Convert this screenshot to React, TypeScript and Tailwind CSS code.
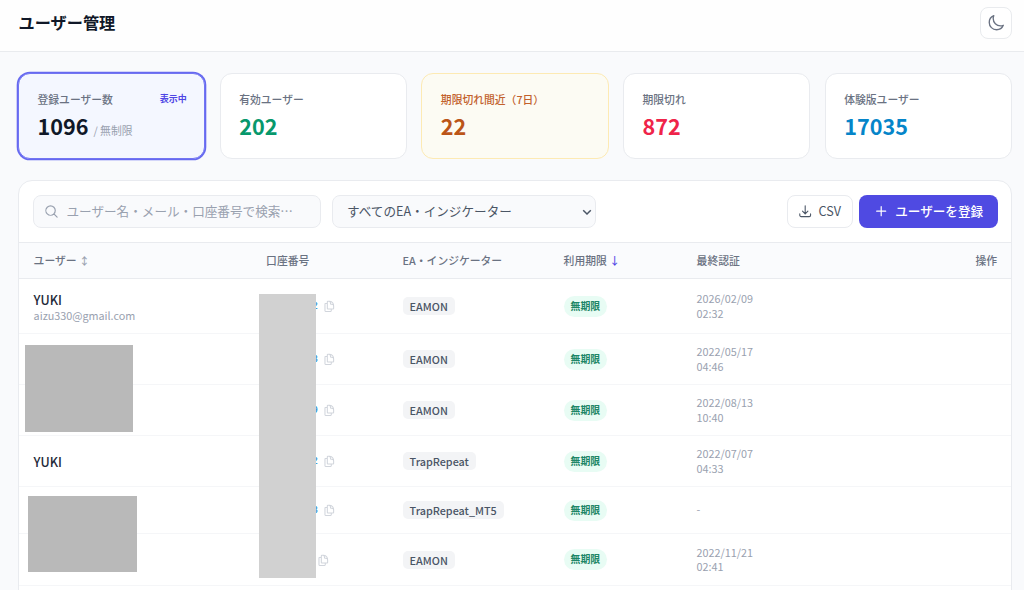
import {
  HiOutlineArrowDownTray,
  HiOutlineDocumentDuplicate,
  HiOutlineMagnifyingGlass,
  HiOutlineMoon,
  HiOutlinePlus,
} from "react-icons/hi2";

type Stat = {
  label: string;
  value: string;
  note?: string;
  badge?: string;
  card: string;
  labelColor: string;
  valueColor: string;
};

type UserRow = {
  id: number;
  name?: string;
  email?: string;
  lastDigit?: string;
  product: string;
  limit: string;
  date?: string;
  time?: string;
  height: string;
};

const stats: Stat[] = [
  {
    label: "登録ユーザー数",
    value: "1096",
    note: "/ 無制限",
    badge: "表示中",
    card: "border-[#7275f2] bg-[#f4f7ff] ring-[1.3px] ring-[#6669f0]",
    labelColor: "text-gray-500",
    valueColor: "text-gray-900",
  },
  {
    label: "有効ユーザー",
    value: "202",
    card: "border-[#e9ebef] bg-white",
    labelColor: "text-gray-500",
    valueColor: "text-[#07986c]",
  },
  {
    label: "期限切れ間近（7日）",
    value: "22",
    card: "border-[#fdeab3] bg-[#fcfbf3]",
    labelColor: "text-[#c2612c]",
    valueColor: "text-[#bb5518]",
  },
  {
    label: "期限切れ",
    value: "872",
    card: "border-[#e9ebef] bg-white",
    labelColor: "text-gray-500",
    valueColor: "text-[#ef2449]",
  },
  {
    label: "体験版ユーザー",
    value: "17035",
    card: "border-[#e9ebef] bg-white",
    labelColor: "text-gray-500",
    valueColor: "text-[#0585c9]",
  },
];

const users: UserRow[] = [
  { id: 1, name: "YUKI", email: "aizu330@gmail.com", lastDigit: "2", product: "EAMON", limit: "無期限", date: "2026/02/09", time: "02:32", height: "h-[55px]" },
  { id: 2, lastDigit: "8", product: "EAMON", limit: "無期限", date: "2022/05/17", time: "04:46", height: "h-[51px]" },
  { id: 3, lastDigit: "9", product: "EAMON", limit: "無期限", date: "2022/08/13", time: "10:40", height: "h-[51px]" },
  { id: 4, name: "YUKI", lastDigit: "2", product: "TrapRepeat", limit: "無期限", date: "2022/07/07", time: "04:33", height: "h-[51px]" },
  { id: 5, lastDigit: "8", product: "TrapRepeat_MT5", limit: "無期限", height: "h-[47px]" },
  { id: 6, product: "EAMON", limit: "無期限", date: "2022/11/21", time: "02:41", height: "h-[52px]" },
];

const columns = "grid grid-cols-[232.5px_136.5px_161px_133px_1fr_auto] items-center pr-[14px] pl-[14.6px]";

const StatCard = ({ stat }: { stat: Stat }) => (
  <div className={`h-[86px] rounded-[12px] border pt-[16.5px] pr-[17.5px] pl-[18.5px] ${stat.card}`}>
    <div className="flex items-center justify-between leading-[16px]">
      <span className={`text-[10.8px] font-medium ${stat.labelColor}`}>{stat.label}</span>
      {stat.badge && <span className="text-[9px] font-bold text-[#4f46e5]">{stat.badge}</span>}
    </div>
    <div className="mt-[5px] flex items-baseline gap-[5px] leading-[28px]">
      <span className={`text-[21.6px] font-bold ${stat.valueColor}`}>{stat.value}</span>
      {stat.note && <span className="text-[10.8px] text-gray-400">{stat.note}</span>}
    </div>
  </div>
);

const TableRow = ({ user }: { user: UserRow }) => (
  <div className={`${columns} ${user.height} border-b border-[#f5f6f8]`}>
    <div className="pt-px">
      {user.name && <p className="text-[12.6px] leading-[16px] font-medium text-gray-800">{user.name}</p>}
      {user.email && <p className="text-[10.8px] leading-[14px] text-gray-400">{user.email}</p>}
    </div>
    <div className="flex items-center gap-[5px] pt-px">
      <span className={`text-right font-['Liberation_Mono',monospace] text-[10.8px] text-sky-600 ${user.lastDigit ? "w-[52px]" : "w-[46px]"}`}>
        {user.lastDigit}
      </span>
      <HiOutlineDocumentDuplicate className="size-[12.6px] text-gray-300" strokeWidth={2} />
    </div>
    <div className="flex">
      <span className="rounded-[5px] bg-gray-100 px-[7px] text-[10.8px] leading-[18px] font-medium text-gray-600">
        {user.product}
      </span>
    </div>
    <div className="flex">
      <span className="rounded-full bg-[#e8fcf4] px-[7px] text-[9.9px] leading-[21px] font-bold text-[#1e8767]">
        {user.limit}
      </span>
    </div>
    <div className="pb-px text-[10.8px] leading-[14.4px] text-gray-400">
      {user.date ? (
        <>
          <p>{user.date}</p>
          <p>{user.time}</p>
        </>
      ) : (
        "-"
      )}
    </div>
  </div>
);

export default function App() {
  return (
    <div className="relative h-[590px] w-[1024px] overflow-hidden bg-[#f9fafc] font-['Noto_Sans_CJK_JP',sans-serif]">
      <header className="flex h-[52px] justify-between border-b border-[#e9ebee] bg-[#fefefe] pt-[6.5px] pr-[12px] pl-[18.5px]">
        <h1 className="text-[16.2px] leading-[31px] font-bold text-gray-900">ユーザー管理</h1>
        <button className="flex size-8 items-center justify-center rounded-[8px] border border-[#e9ebee] bg-white text-gray-500">
          <HiOutlineMoon className="size-[18px]" strokeWidth={1.8} />
        </button>
      </header>

      <main className="pt-[21px] pr-[12px] pl-[18px]">
        <div className="grid grid-cols-5 gap-[14.4px]">
          {stats.map((stat) => (
            <StatCard key={stat.label} stat={stat} />
          ))}
        </div>

        <section className="mt-[21px] h-[440px] overflow-hidden rounded-[14px] border border-[#e9ebef] bg-white">
          <div className="flex h-[62px] items-center border-b border-[#e9ebef] pr-[13px] pl-[14px]">
            <div className="flex h-[33px] w-[288px] items-center rounded-[8px] border border-[#e9ebef] bg-[#f9fafc] pl-[10px] text-gray-400">
              <HiOutlineMagnifyingGlass className="size-[15px]" strokeWidth={1.9} />
              <span className="ml-[7.5px] text-[12.6px]">ユーザー名・メール・口座番号で検索…</span>
            </div>
            <div className="ml-[11px] flex h-[33px] w-[264px] items-center justify-between rounded-[8px] border border-[#e9ebef] bg-[#f9fafc] pr-[3px] pl-[14px] text-gray-600">
              <span className="text-[12.6px]">すべてのEA・インジケーター</span>
              <svg className="size-[10px]" viewBox="0 0 10 10" fill="none" stroke="currentColor" strokeWidth="1.5">
                <path d="M1.2 3.2 5 7l3.8-3.8" />
              </svg>
            </div>
            <button className="ml-auto flex h-[33px] w-[66px] items-center justify-center gap-[6px] rounded-[8px] border border-[#e9ebef] bg-white pr-px text-[12.6px] text-gray-600">
              <HiOutlineArrowDownTray className="size-[14.4px]" strokeWidth={1.8} />
              CSV
            </button>
            <button className="ml-[6px] flex h-[33px] w-[139px] items-center justify-center gap-[7px] rounded-[8px] bg-[#4f4ae2] text-[12.6px] font-medium text-white">
              <HiOutlinePlus className="size-[14.4px]" strokeWidth={2} />
              ユーザーを登録
            </button>
          </div>

          <div className={`${columns} h-[36px] border-b border-[#e9ebef] bg-[#fafbfd] text-[10.8px] font-medium text-gray-500`}>
            <div>
              ユーザー <span className="text-gray-400">↕</span>
            </div>
            <div>口座番号</div>
            <div>EA・インジケーター</div>
            <div>
              利用期限 <span className="text-[#4f46e5]">↓</span>
            </div>
            <div>最終認証</div>
            <div>操作</div>
          </div>

          {users.map((user) => (
            <TableRow key={user.id} user={user} />
          ))}
        </section>
      </main>

      {/* privacy masks laid over the table */}
      <div className="absolute top-[345px] left-[25px] h-[87px] w-[108px] bg-[#b9b9b9]" />
      <div className="absolute top-[496px] left-[28px] h-[76px] w-[109px] bg-[#b9b9b9]" />
      <div className="absolute top-[294px] left-[259px] h-[284px] w-[57px] bg-[#d1d1d1]" />
    </div>
  );
}
